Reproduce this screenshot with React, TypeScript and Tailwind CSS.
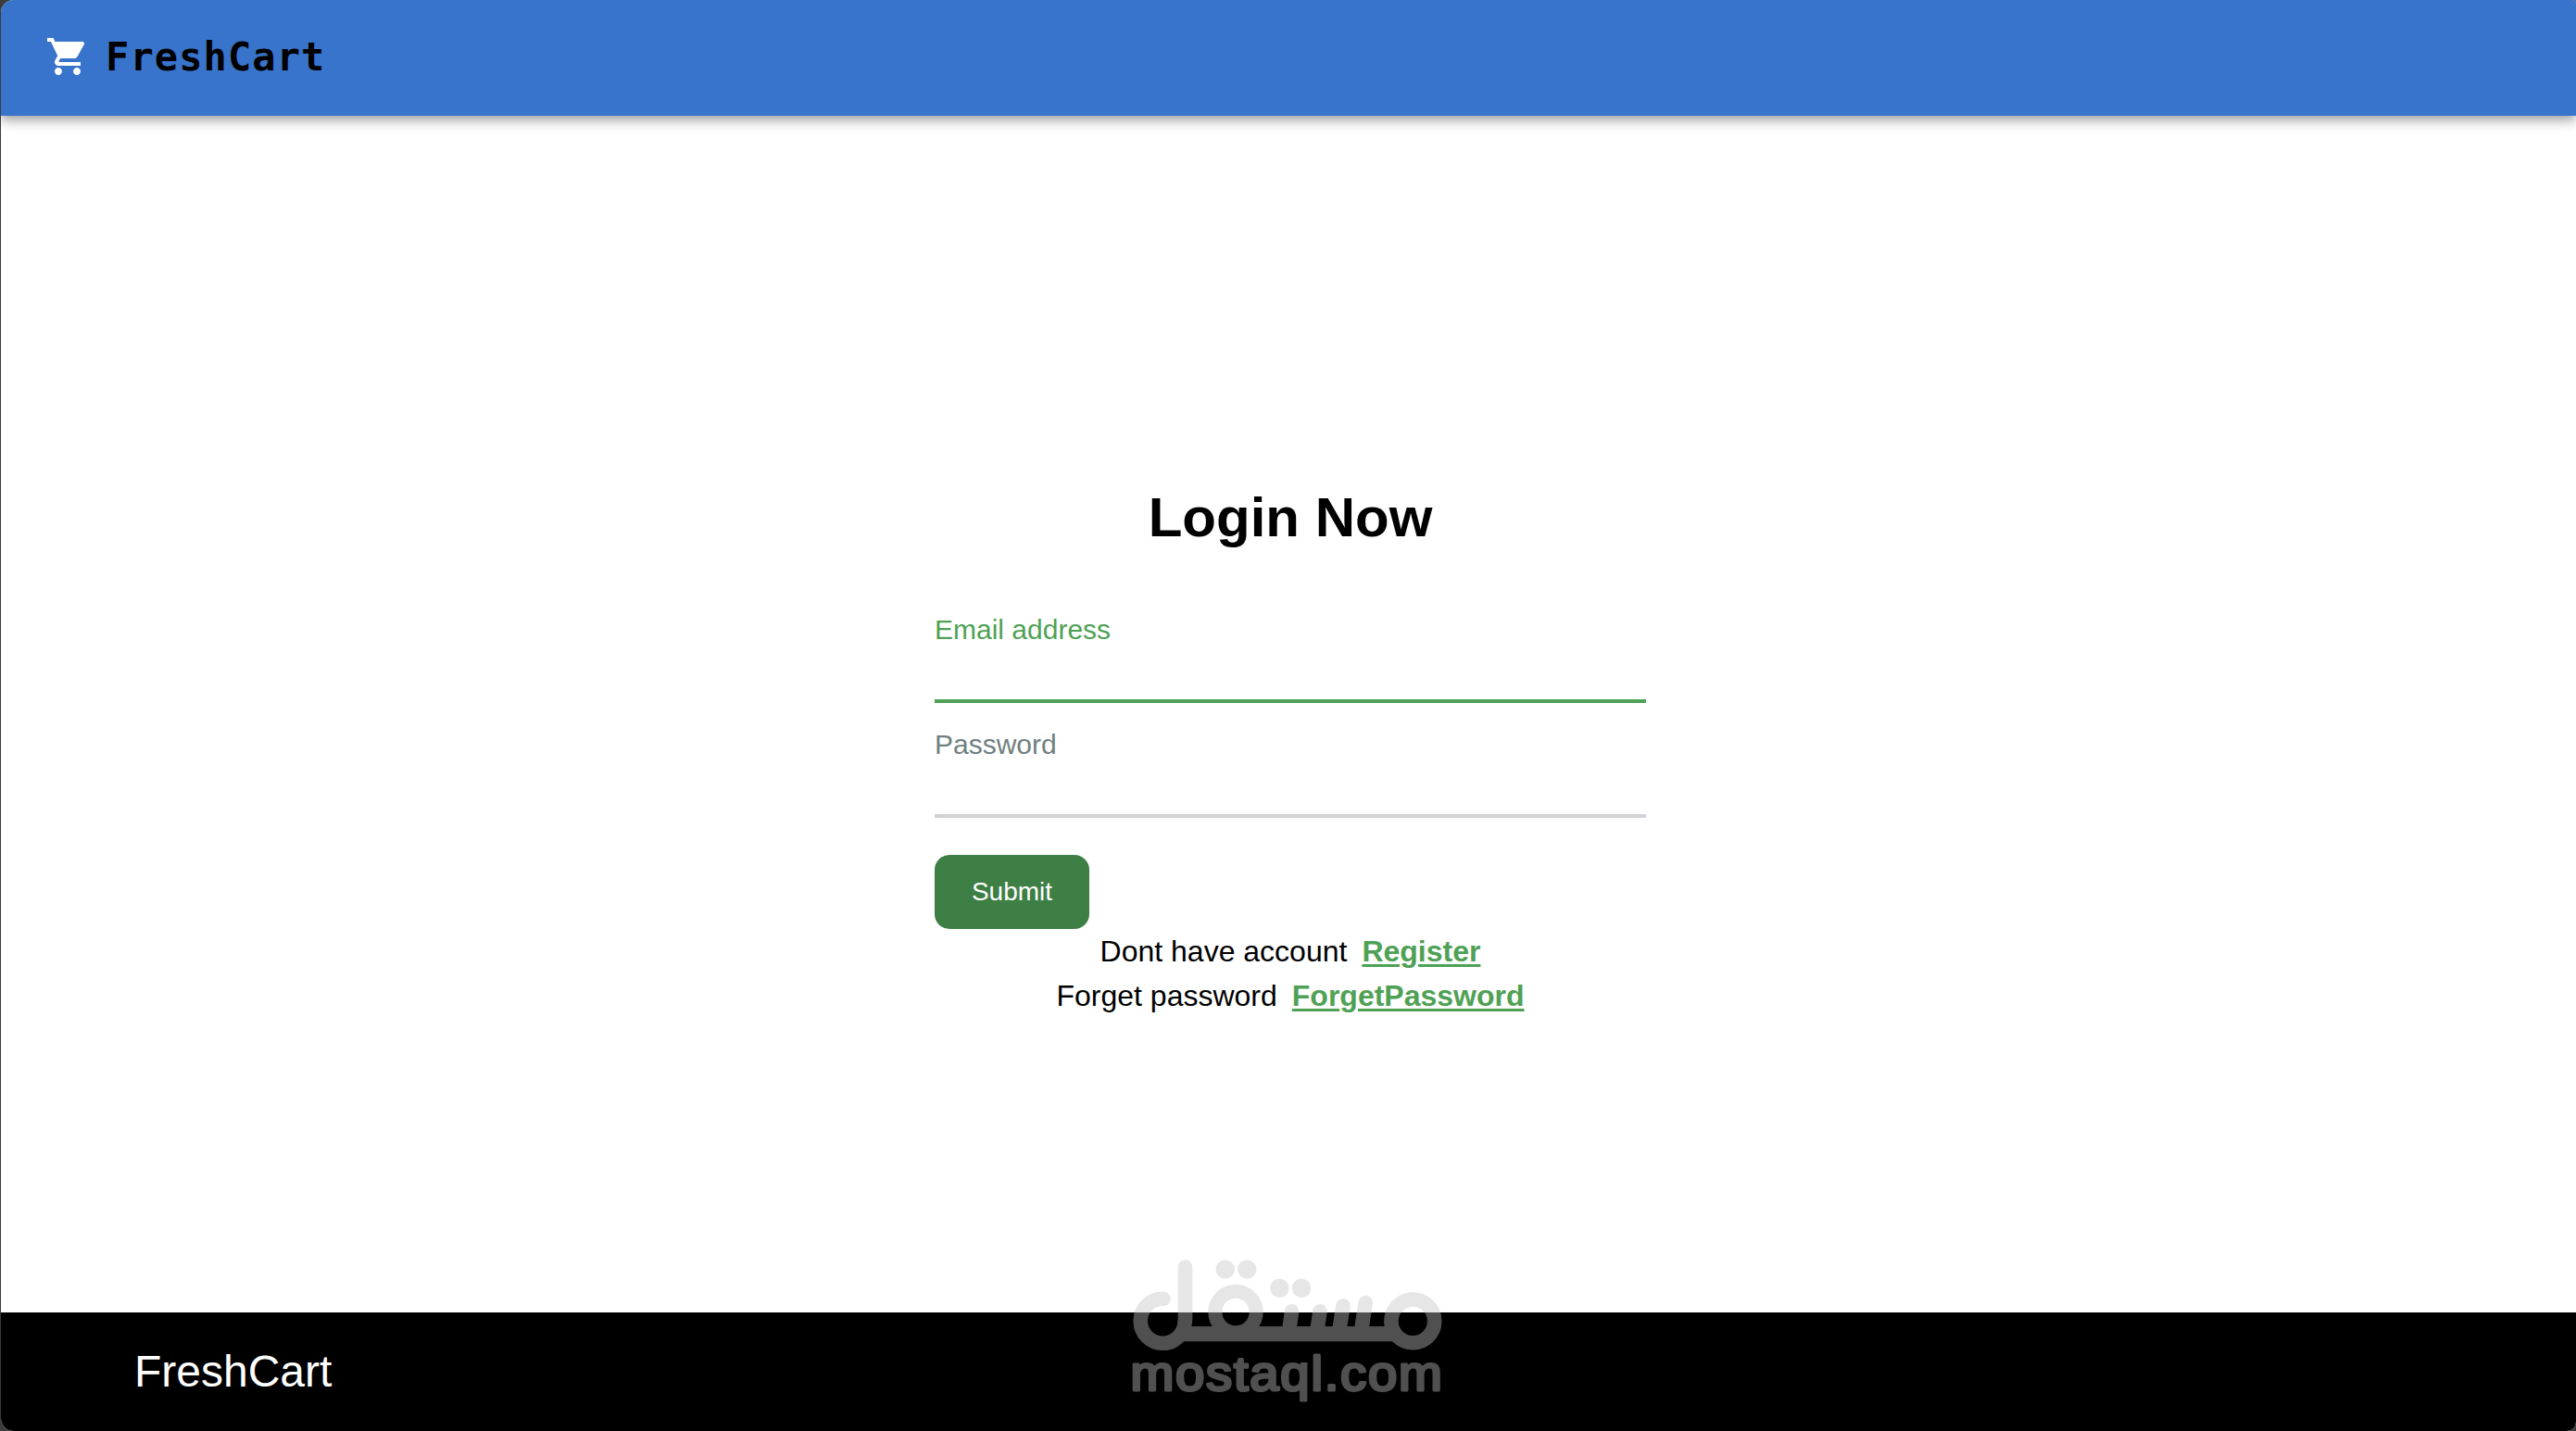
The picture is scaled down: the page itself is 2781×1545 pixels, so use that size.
import React, { useState } from 'react';
import { MdShoppingCart } from 'react-icons/md';

interface FieldProps {
    id: string;
    label: string;
    type: string;
    active?: boolean;
    value: string;
    onChange: (value: string) => void;
}

const Field: React.FC<FieldProps> = ({ id, label, type, active, value, onChange }) => (
    <div className="flex flex-col">
        <label htmlFor={id} className={`text-[30px] leading-[45px] ${active ? 'text-[#4fa155]' : 'text-[#6f8080]'}`}>
            {label}
        </label>
        <input
            id={id}
            type={type}
            value={value}
            onChange={e => onChange(e.target.value)}
            className={`h-[57px] w-full border-b-4 bg-transparent text-[30px] outline-none ${active ? 'border-[#4fa155]' : 'border-[#d1d1d6]'}`}
        />
    </div>
);

const Navbar = () => (
    <header className="relative flex h-[125px] items-center bg-[#3874cb] pl-12 shadow-[0_4px_8px_-2px_rgba(0,0,0,0.2),0_8px_10px_0_rgba(0,0,0,0.14),0_2px_20px_0_rgba(0,0,0,0.12)]">
        <MdShoppingCart className="-mt-[3px] size-12 text-white" />
        <span className="-mt-px ml-[17px] font-['DejaVu_Sans_Mono',monospace] text-[42px] leading-[60px] font-bold tracking-[1.1px] text-black">
            FreshCart
        </span>
    </header>
);

const LoginForm = () => {
    const [email, setEmail] = useState('');
    const [password, setPassword] = useState('');

    return (
        <main className="flex flex-1 flex-col items-center pt-[398px] pl-[4px]">
            <h1 className="text-[60px] leading-[72px] font-bold">Login Now</h1>
            <form className="mt-[62px] flex w-3xl flex-col" onSubmit={e => e.preventDefault()}>
                <div className="flex flex-col gap-[22px]">
                    <Field id="email" label="Email address" type="email" active value={email} onChange={setEmail} />
                    <Field id="password" label="Password" type="password" value={password} onChange={setPassword} />
                </div>
                <button type="submit" className="mt-10 h-20 w-[167px] rounded-2xl bg-[#3e7f45] text-[28px] text-white">
                    Submit
                </button>
            </form>
            <p className="flex gap-4 text-[32px] leading-[48px]">
                Dont have account
                <a href="#register" className="font-bold text-[#4fa155] underline decoration-[3px] underline-offset-[3px]">Register</a>
            </p>
            <p className="flex gap-4 text-[32px] leading-[48px]">
                Forget password
                <a href="#forget" className="font-bold text-[#4fa155] underline decoration-[3px] underline-offset-[3px]">ForgetPassword</a>
            </p>
        </main>
    );
};

// Translucent brand mark that floats over the page and the footer
const Watermark = () => (
    <svg className="pointer-events-none absolute top-[1340px] left-[1200px]" width="380" height="205" viewBox="0 0 380 205">
        <g opacity="0.41" stroke="#c3c3c3" strokeWidth="15.6" fill="none" strokeLinecap="round">
            <line x1="79.5" y1="28" x2="79.5" y2="86" />
            <circle cx="55.2" cy="86.3" r="24" strokeDasharray="113.1 150.8" />
            <line x1="78" y1="100.2" x2="306" y2="100.2" strokeWidth="16.3" strokeLinecap="butt" />
            <circle cx="134" cy="76.5" r="22.2" strokeWidth="15" />
            <line x1="194.6" y1="75.8" x2="191.5" y2="98" />
            <line x1="225" y1="75.8" x2="221.7" y2="98" />
            <line x1="250" y1="70" x2="245.6" y2="98" />
            <line x1="274.2" y1="66.5" x2="269.4" y2="98" />
            <circle cx="325.3" cy="86.4" r="23.4" />
            <g fill="#c3c3c3" stroke="none">
                <circle cx="122.7" cy="30.4" r="10.2" />
                <circle cx="146.3" cy="30.4" r="10.2" />
                <circle cx="181.4" cy="50.8" r="10.2" />
                <circle cx="205" cy="50.8" r="10.2" />
            </g>
            <text
                x="20.5"
                y="160.5"
                textLength="338"
                lengthAdjust="spacingAndGlyphs"
                fill="#c3c3c3"
                strokeWidth="3"
                strokeLinejoin="round"
                className="font-['Liberation_Sans',Arial,sans-serif] text-[51px] tracking-[1.6px]"
            >
                mostaql.com
            </text>
        </g>
    </svg>
);

const App = () => (
    <div className="relative h-[1545px] w-[2781px] overflow-hidden bg-[#3c3c3c] pl-px font-['Liberation_Sans',Arial,sans-serif] text-black">
        <div className="flex h-[1545px] flex-col overflow-hidden rounded-l-[14px] rounded-tr-[3px] rounded-br-[10px] bg-white">
            <Navbar />
            <LoginForm />
            <footer className="flex h-32 items-center bg-black pb-px pl-36 text-5xl text-white">
                FreshCart
            </footer>
        </div>
        <Watermark />
    </div>
);

export default App;
